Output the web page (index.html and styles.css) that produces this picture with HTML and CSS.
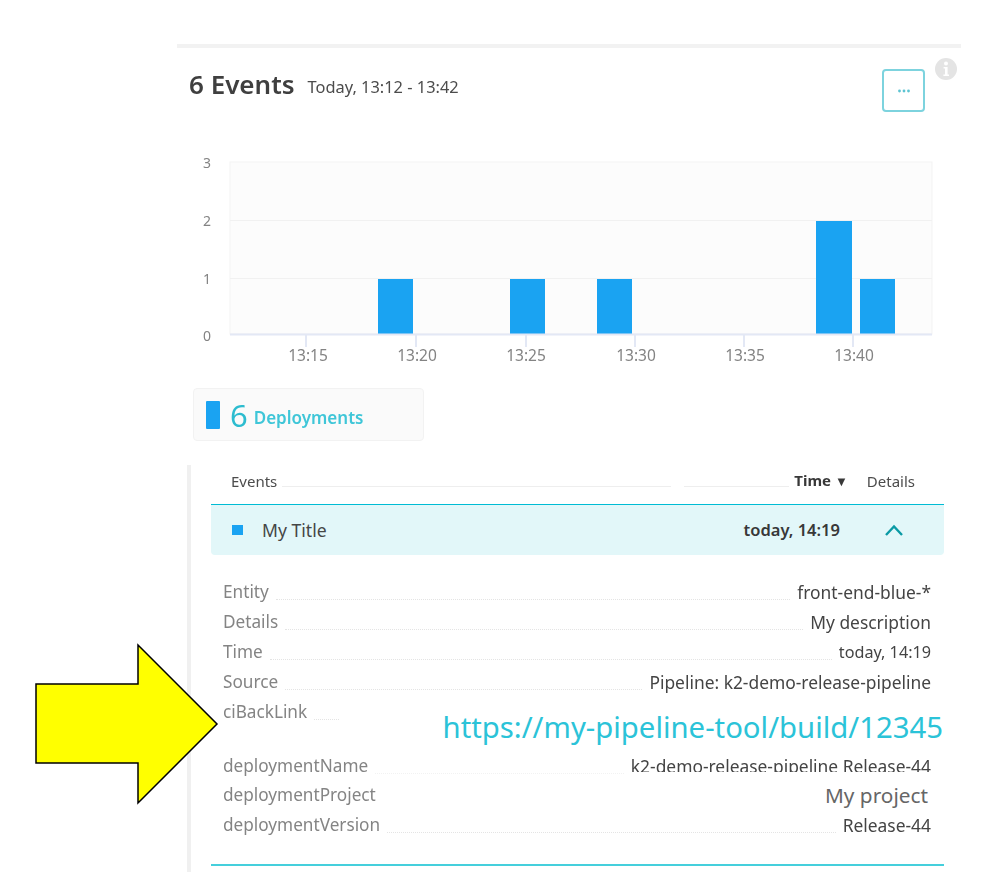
FILE: index.html
```html
<!DOCTYPE html>
<html lang="en">
<head>
<meta charset="utf-8">
<title>6 Events</title>
<link rel="stylesheet" href="styles.css">
</head>
<body>
<div class="page">
  <div class="top-rule"></div>
  <header class="header">
    <h1 class="title">6 Events</h1>
    <span class="range">Today, 13:12 - 13:42</span>
    <button class="more" type="button" aria-label="More">
      <svg width="14" height="4" viewBox="0 0 14 4"><circle cx="2.5" cy="2" r="1.4"/><circle cx="7" cy="2" r="1.4"/><circle cx="11.5" cy="2" r="1.4"/></svg>
    </button>
    <svg class="info" width="22" height="22" viewBox="0 0 22 22"><circle cx="11" cy="11" r="11" fill="#e4e4e4"/><circle cx="11" cy="5.6" r="2" fill="#fff"/><path d="M8.6 9h4v7.4h1.4V18H8.400v-1.600h1.600v-5.800H8.600z" fill="#fff"/></svg>
  </header>

  <svg class="chart" width="760" height="218" viewBox="193 150 760 218">
    <rect x="230" y="162" width="702" height="172" fill="#fcfcfc" stroke="#f3f3f3"/>
    <path d="M230 220.500H932M230 278.500H932" stroke="#f1f1f1" fill="none"/>
    <g fill="#1aa3f2">
      <rect x="378" y="279" width="35" height="55"/>
      <rect x="510" y="279" width="35" height="55"/>
      <rect x="597" y="279" width="35" height="55"/>
      <rect x="816" y="221" width="36" height="113"/>
      <rect x="860" y="279" width="35" height="55"/>
    </g>
    <path d="M230 334.500H932M306 335V347M416 335V347M526 335V347M635 335V347M744 335V347M853 335V347" stroke="#e3e8f5" stroke-width="2" fill="none"/>
    <g class="axis axis-y" text-anchor="middle">
      <text x="207" y="168">3</text>
      <text x="207" y="226">2</text>
      <text x="207" y="284">1</text>
      <text x="207" y="341">0</text>
    </g>
    <g class="axis" text-anchor="middle">
      <text x="308" y="361">13:15</text>
      <text x="417" y="361">13:20</text>
      <text x="526" y="361">13:25</text>
      <text x="636" y="361">13:30</text>
      <text x="745" y="361">13:35</text>
      <text x="854" y="361">13:40</text>
    </g>
  </svg>

  <div class="legend">
    <span class="legend-bar"></span>
    <span class="legend-count">6</span>
    <span class="legend-name">Deployments</span>
  </div>

  <section class="table">
    <div class="table-head">
      <span class="col-events">Events</span>
      <span class="head-line"></span>
      <span class="head-line head-line-short"></span>
      <span class="col-time">Time <span class="sort">▼</span></span>
      <span class="col-details">Details</span>
    </div>
    <div class="event-row">
      <span class="event-mark"></span>
      <span class="event-title">My Title</span>
      <span class="event-time">today, 14:19</span>
      <svg class="chevron" width="20" height="14" viewBox="0 0 20 14"><path d="M2 12L10 3.500L18 12" fill="none" stroke="#0a9aa5" stroke-width="2.400"/></svg>
    </div>
    <div class="details">
      <div class="row"><span class="label">Entity</span><span class="leader"></span><span class="value">front-end-blue-*</span></div>
      <div class="row"><span class="label">Details</span><span class="leader"></span><span class="value">My description</span></div>
      <div class="row"><span class="label">Time</span><span class="leader"></span><span class="value value-time">today, 14:19</span></div>
      <div class="row"><span class="label">Source</span><span class="leader"></span><span class="value">Pipeline: k2-demo-release-pipeline</span></div>
      <div class="row row-link"><span class="label">ciBackLink</span><span class="leader leader-short"></span><a class="link" href="#">https://my-pipeline-tool/build/12345</a></div>
      <div class="row row-tight"><span class="label">deploymentName</span><span class="leader leader-faint"></span><span class="value value-clipped">k2-demo-release-pipeline Release-44</span></div>
      <div class="row"><span class="label">deploymentProject</span><span class="spacer"></span><span class="value-large">My project</span></div>
      <div class="row"><span class="label">deploymentVersion</span><span class="leader"></span><span class="value">Release-44</span></div>
    </div>
    <div class="bottom-rule"></div>
  </section>

  <svg class="arrow" width="186" height="162" viewBox="34 643 186 162"><path d="M36 684H138V645L217 724L138 803V763H36Z" fill="#ffff00" stroke="#000" stroke-width="1.500"/></svg>
</div>
</body>
</html>
```
FILE: styles.css
```css
* { box-sizing: border-box; }
html, body { margin: 0; padding: 0; background: #fff; }
body { font-family: "Noto Sans", "Open Sans", sans-serif; color: #454646; }
.page { position: relative; width: 1000px; height: 884px; overflow: hidden; padding: 44px 39px 0 177px; }
.top-rule { height: 4px; background: #f2f2f2; }
.header { position: relative; display: flex; align-items: flex-start; height: 102px; padding: 20px 0 0 12px; filter: blur(0.35px); }
.title { margin: -1px 0 0; font-size: 26px; line-height: 34px; font-weight: 600; color: #3f3f3f; }
.range { margin-left: 13px; font-size: 16.400px; line-height: 38px; color: #4c4c4c; }
.more { display: flex; align-items: center; justify-content: center; width: 43px; height: 43px; margin: 1px 36px 0 auto; padding: 0; background: #fff; border: 2px solid #7dd3de; border-radius: 4px; }
.more svg { fill: #5cc4d2; display: block; }
.info { position: absolute; top: 10px; left: 758px; }
.chart { display: block; margin-left: 16px; filter: blur(0.3px); }
.axis { font-size: 15.500px; fill: #838383; }
.axis-y { font-size: 14px; }
.legend { display: flex; align-items: center; width: 231px; height: 53px; margin: 20px 0 0 16px; padding-left: 12px; background: #fafafa; border: 1px solid #f2f2f2; border-radius: 4px; filter: blur(0.3px); }
.legend-bar { width: 14px; height: 28px; background: #1aa3f2; border-radius: 1px; }
.legend-count { margin-left: 10px; font-size: 31px; line-height: 36px; font-weight: 400; color: #2cbccf; }
.legend-name { margin: 5px 0 0 6px; font-size: 17px; font-weight: 600; color: #3fc6d8; }
.table { width: 757px; height: 407px; margin: 24px 0 0 10px; padding-left: 20px; border-left: 4px solid #f0f0f0; }
.table-head { display: flex; align-items: center; height: 39px; padding: 0 29px 8px 20px; font-size: 15px; line-height: 18px; color: #4c4c4c; filter: blur(0.3px); }
.head-line { flex: 1; height: 1px; margin: 11px 13px 0 5px; background: #eee; }
.head-line-short { flex: 0 0 105px; margin: 11px 5px 0 0; }
.col-time { font-weight: 700; color: #383838; }
.sort { font-size: 13px; }
.col-details { margin-left: 19px; }
.event-row { display: flex; align-items: center; height: 51px; padding: 0 40px 0 21px; background: #e2f7f9; border-top: 1px solid #00bcd4; border-radius: 0 0 4px 4px; }
.event-mark { width: 11px; height: 10px; background: #1aa3f2; }
.event-title { margin: -1px 0 0 19px; font-size: 17.600px; color: #454646; }
.event-time { margin: -2px 44px 0 auto; font-size: 16.500px; font-weight: 600; color: #383838; }
.details { padding: 22px 13px 0 12px; }
.row { display: flex; align-items: flex-start; height: 30px; font-size: 17.200px; line-height: 30px; }
.row-link { height: 54px; }
.row-tight { height: 29px; }
.label { color: #848484; filter: blur(0.3px); }
.leader { flex: 1; margin: 22px 7px 0 7px; border-bottom: 1px dotted #e4e4e4; }
.leader-short { flex: 0 0 25px; }
.leader-faint { border-bottom-color: #f2f2f2; }
.spacer { flex: 1; }
.value { font-size: 17.400px; color: #444; filter: blur(0.3px); }
.value-time { font-size: 16.200px; }
.value-clipped { height: 21px; overflow: hidden; line-height: 30px; }
.value-large { margin-right: 3px; font-size: 20.800px; color: #666; }
.link { margin: 15px -12px 0 auto; font-size: 29.300px; line-height: 30px; color: #2bc3d8; text-decoration: none; white-space: nowrap; }
.bottom-rule { height: 2px; margin-top: 24px; background: #45cfdc; }
.arrow { position: absolute; left: 34px; top: 643px; }
```
